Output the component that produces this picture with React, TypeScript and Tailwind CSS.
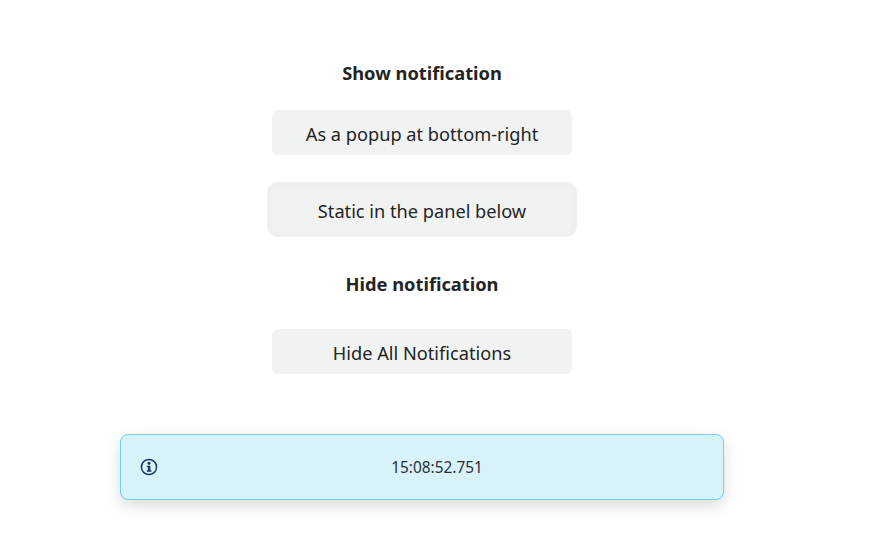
const App = () => {
    return (
        <div className="h-[558px] w-[882px] overflow-hidden bg-white font-['Noto_Sans',sans-serif] text-[#242424]">
            <div className="ml-[120px] flex w-[604px] flex-col items-center pt-[60px]">
                <h2 className="h-[26px] text-[18.3px] leading-[26px] font-bold">Show notification</h2>

                <button className="mt-6 h-[45px] w-[300px] rounded-md bg-[#f1f3f2] pt-[4px] text-[18.2px]">
                    As a popup at bottom-right
                </button>

                {/* focused button */}
                <button className="mt-[32px] h-[45px] w-[300px] rounded-md bg-[#f1f3f2] pt-[4px] text-[18.2px] ring-[5px] ring-[#efefef]">
                    Static in the panel below
                </button>

                <h2 className="mt-[39px] h-[26px] text-[18.3px] leading-[26px] font-bold">Hide notification</h2>

                <button className="mt-[32px] h-[45px] w-[300px] rounded-md bg-[#f1f3f2] pt-[4px] text-[18.2px]">
                    Hide All Notifications
                </button>

                {/* Notification */}
                <div className="mt-[60px] flex h-[66px] w-full items-center rounded-lg border border-[#6bd3f3] bg-[#d8f2f9] pr-[8px] pl-[20px] text-[15.4px] shadow-[0_6px_16px_rgba(0,0,0,0.14)]">
                    <svg
                        className="-ml-px mr-px size-[18px] shrink-0 text-[#1b3a6b]"
                        viewBox="0 0 18 18"
                        fill="none"
                    >
                        <circle cx="9" cy="9" r="7.6" stroke="currentColor" strokeWidth="1.5" />
                        <circle cx="9" cy="5.3" r="1.5" fill="currentColor" />
                        <path d="M6.8 7.7h3.6v4.6h1v1.5H6.8v-1.5h1.1V9.2H6.8z" fill="currentColor" />
                    </svg>
                    <span className="flex-1 pt-[2px] text-center text-[#2b2f36]">15:08:52.751</span>
                </div>
            </div>
        </div>
    );
};

export default App;
